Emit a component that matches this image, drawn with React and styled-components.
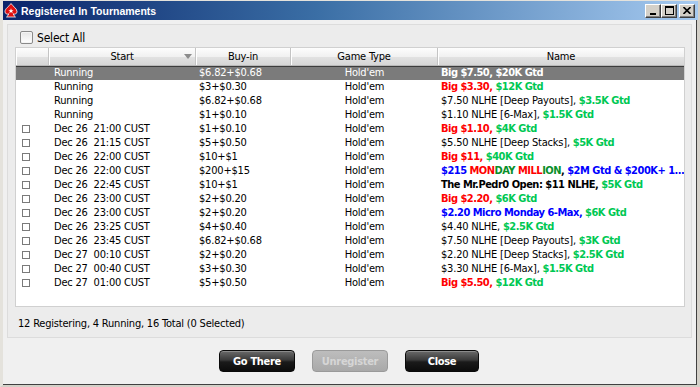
import React from "react";
import styled, { createGlobalStyle } from "styled-components";

const GlobalStyle = createGlobalStyle`
  html, body {
    margin: 0;
    padding: 0;
    background: #d4d0c8;
  }
`;

const NARROW = `"DejaVu Sans Condensed", "Liberation Sans", sans-serif`;
const GREEN = "#00c853";
const RED = "#ff0000";
const BLUE = "#0000ff";
const DGREEN = "#0a8f2a";

const Window = styled.div`
  width: 700px;
  height: 387px;
  box-sizing: border-box;
  display: flex;
  flex-direction: column;
  background: #f0f0f0;
  border-left: 3px solid #e4e2dc;
  border-top: 1px solid #e4e2dc;
  border-right: 3px solid #d4d0c8;
  border-bottom: 2px solid #d4d0c8;
  box-shadow: inset -1px -1px 0 #404040;
  font-family: ${NARROW};
  font-size: 11px;
  letter-spacing: -0.2px;
  color: #000;
`;

const TitleBar = styled.div`
  height: 19px;
  flex: none;
  display: flex;
  align-items: center;
  padding: 0 3px 0 1px;
  margin-right: -1px;
  background: linear-gradient(to right, #0a246a 0%, #3a6ea5 45%, #a6caf0 100%);
`;

const TitleText = styled.span`
  flex: 1;
  margin-left: 3px;
  color: #fff;
  font-family: "Liberation Sans", Arial, sans-serif;
  font-weight: bold;
  font-size: 10.5px;
  letter-spacing: 0;
`;

const WinButtons = styled.div`
  display: flex;
`;

const WinButton = styled.div`
  width: 16px;
  height: 14px;
  margin-left: ${(p) => (p.$gap ? "2px" : "0")};
  box-sizing: border-box;
  background: #d4d0c8;
  border: 1px solid;
  border-color: #fff #404040 #404040 #fff;
  box-shadow: inset -1px -1px 0 #808080;
  display: flex;
  align-items: center;
  justify-content: center;
`;

const Body = styled.div`
  flex: 1;
  display: flex;
  flex-direction: column;
  padding: 4px 5px 0 4px;
  min-height: 0;
`;

const Panel = styled.div`
  height: 314px;
  box-sizing: border-box;
  border: 1px solid #dcdcdc;
  background: #ececec;
  display: flex;
  flex-direction: column;
  padding: 4px 6px 0 7px;
`;

const SelectRow = styled.label`
  height: 17px;
  display: flex;
  align-items: center;
  gap: 2px;
  margin-bottom: 1px;
  padding-left: 5px;
  font-size: 12px;
`;

const BigCheck = styled.span`
  width: 11px;
  height: 11px;
  border: 1px solid #8a8a8a;
  border-radius: 2px;
  background: linear-gradient(#e6e6e6, #ffffff);
  box-shadow: inset 0 0 0 1px #f4f4f4;
  margin-right: 2px;
`;

const Table = styled.div`
  height: 260px;
  box-sizing: border-box;
  background: #fff;
  border: 1px solid #d0d0d0;
  display: flex;
  flex-direction: column;
  overflow: hidden;
`;

const cols = "33px 147px 95px 147px 1fr";

const HeaderRow = styled.div`
  display: grid;
  grid-template-columns: ${cols};
  height: 17px;
  flex: none;
  background: linear-gradient(#fdfdfd 0%, #f1f1f1 50%, #e2e2e2 51%, #d6d6d6 100%);
  border-bottom: 1px solid #b8b8b8;
`;

const HeadCell = styled.div`
  position: relative;
  display: flex;
  align-items: center;
  justify-content: center;
  border-right: 1px solid #c4c4c4;
  box-shadow: inset 1px 0 0 #fff;
  &:last-child {
    border-right: none;
  }
`;

const SortArrow = styled.span`
  position: absolute;
  right: 3px;
  top: 6px;
  width: 0;
  height: 0;
  border-left: 4px solid transparent;
  border-right: 4px solid transparent;
  border-top: 5px solid #8c8c8c;
`;

const Row = styled.div`
  display: grid;
  grid-template-columns: ${cols};
  height: 14px;
  line-height: 14px;
  flex: none;
  background: ${(p) => (p.$selected ? "#7b7b7b" : "#fff")};
  color: ${(p) => (p.$selected ? "#fff" : "#000")};
  box-shadow: ${(p) => (p.$selected ? "inset 0 1px 0 #3c3c3c" : "none")};
`;

const Cell = styled.div`
  white-space: pre;
  overflow: hidden;
  padding-left: ${(p) => p.$pad || 0}px;
  text-align: ${(p) => p.$align || "left"};
  display: ${(p) => (p.$box ? "flex" : "block")};
  align-items: center;
`;

const SmallCheck = styled.span`
  width: 6px;
  height: 6px;
  margin-left: 6px;
  border: 1px solid #7a7a7a;
  background: #fff;
`;

const Seg = styled.span`
  color: ${(p) => p.$color || "inherit"};
  font-weight: ${(p) => (p.$bold ? "bold" : "normal")};
  letter-spacing: ${(p) => (p.$bold ? "-0.5px" : "-0.2px")};
`;

const Status = styled.div`
  flex: 1;
  display: flex;
  align-items: center;
  padding: 2px 0 0 3px;
`;

const ButtonBar = styled.div`
  flex: 1;
  display: flex;
  justify-content: center;
  align-items: flex-start;
  padding-top: 12px;
  padding-right: 1px;
  gap: 17px;
`;

const Button = styled.div`
  width: ${(p) => p.$w || 76}px;
  height: 22px;
  box-sizing: border-box;
  border-radius: 4px;
  display: flex;
  align-items: center;
  justify-content: center;
  font-weight: bold;
  letter-spacing: -0.3px;
  border: 1px solid ${(p) => (p.$disabled ? "#9a9a9a" : "#0a0a0a")};
  color: ${(p) => (p.$disabled ? "#d6d6d6" : "#fff")};
  background: ${(p) =>
    p.$disabled
      ? "linear-gradient(#bdbdbd, #a9a9a9)"
      : "linear-gradient(#6a6a6a 0%, #3a3a3a 45%, #1a1a1a 55%, #0c0c0c 100%)"};
  box-shadow: ${(p) => (p.$disabled ? "none" : "inset 0 1px 0 #8a8a8a")};
`;

const s = (text, color, bold = true) => ({ text, color, bold });
const p = (text) => ({ text, color: null, bold: false });

const rows = [
  { start: "Running", buy: "$6.82+$0.68", name: [s("Big $7.50, $20K Gtd", null)], selected: true },
  { start: "Running", buy: "$3+$0.30", name: [s("Big $3.30, ", RED), s("$12K Gtd", GREEN)] },
  { start: "Running", buy: "$6.82+$0.68", name: [p("$7.50 NLHE [Deep Payouts], "), s("$3.5K Gtd", GREEN)] },
  { start: "Running", buy: "$1+$0.10", name: [p("$1.10 NLHE [6-Max], "), s("$1.5K Gtd", GREEN)] },
  { start: "Dec 26  21:00 CUST", buy: "$1+$0.10", check: true, name: [s("Big $1.10, ", RED), s("$4K Gtd", GREEN)] },
  { start: "Dec 26  21:15 CUST", buy: "$5+$0.50", check: true, name: [p("$5.50 NLHE [Deep Stacks], "), s("$5K Gtd", GREEN)] },
  { start: "Dec 26  22:00 CUST", buy: "$10+$1", check: true, name: [s("Big $11, ", RED), s("$40K Gtd", GREEN)] },
  {
    start: "Dec 26  22:00 CUST",
    buy: "$200+$15",
    check: true,
    name: [
      s("$215 ", BLUE),
      s("MON", RED),
      s("DAY ", DGREEN),
      s("MILL", RED),
      s("ION", DGREEN),
      s(", ", "#000"),
      s("$2M Gtd & $200K+ 1...", BLUE),
    ],
  },
  { start: "Dec 26  22:45 CUST", buy: "$10+$1", check: true, name: [s("The Mr.Pedr0 Open: $11 NLHE, ", "#000"), s("$5K Gtd", GREEN)] },
  { start: "Dec 26  23:00 CUST", buy: "$2+$0.20", check: true, name: [s("Big $2.20, ", RED), s("$6K Gtd", GREEN)] },
  { start: "Dec 26  23:00 CUST", buy: "$2+$0.20", check: true, name: [s("$2.20 Micro Monday 6-Max, ", BLUE), s("$6K Gtd", GREEN)] },
  { start: "Dec 26  23:25 CUST", buy: "$4+$0.40", check: true, name: [p("$4.40 NLHE, "), s("$2.5K Gtd", GREEN)] },
  { start: "Dec 26  23:45 CUST", buy: "$6.82+$0.68", check: true, name: [p("$7.50 NLHE [Deep Payouts], "), s("$3K Gtd", GREEN)] },
  { start: "Dec 27  00:10 CUST", buy: "$2+$0.20", check: true, name: [p("$2.20 NLHE [Deep Stacks], "), s("$2.5K Gtd", GREEN)] },
  { start: "Dec 27  00:40 CUST", buy: "$3+$0.30", check: true, name: [p("$3.30 NLHE [6-Max], "), s("$1.5K Gtd", GREEN)] },
  { start: "Dec 27  01:00 CUST", buy: "$5+$0.50", check: true, name: [s("Big $5.50, ", RED), s("$12K Gtd", GREEN)] },
];

const SpadeIcon = () => (
  <svg width="14" height="15" viewBox="0 0 14 15">
    <path
      d="M7 0.5 C5 3.5 1 5.5 1 8.6 C1 10.7 3 11.8 4.8 10.8 C4.4 12.2 3.6 13.2 2.5 14 L11.5 14 C10.4 13.2 9.6 12.2 9.2 10.8 C11 11.8 13 10.7 13 8.6 C13 5.5 9 3.5 7 0.5 Z"
      fill="#e01010"
      stroke="#fff"
      strokeWidth="0.8"
    />
    <path d="M7 5.2 L7.7 7.2 L9.6 7.2 L8.1 8.3 L8.7 10.2 L7 9 L5.3 10.2 L5.9 8.3 L4.4 7.2 L6.3 7.2 Z" fill="#fff" />
  </svg>
);

const MinIcon = () => (
  <svg width="8" height="8" viewBox="0 0 8 8">
    <rect x="1" y="6" width="6" height="2" fill="#000" />
  </svg>
);

const MaxIcon = () => (
  <svg width="9" height="9" viewBox="0 0 9 9">
    <rect x="0.5" y="0.5" width="8" height="8" fill="none" stroke="#000" />
    <rect x="0" y="0" width="9" height="2" fill="#000" />
  </svg>
);

const CloseIcon = () => (
  <svg width="8" height="7" viewBox="0 0 8 7">
    <path d="M0.5 0 L7.5 7 M7.5 0 L0.5 7" stroke="#000" strokeWidth="1.6" />
  </svg>
);

export default function App() {
  return (
    <>
      <GlobalStyle />
      <Window>
        <TitleBar>
          <SpadeIcon />
          <TitleText>Registered In Tournaments</TitleText>
          <WinButtons>
            <WinButton>
              <MinIcon />
            </WinButton>
            <WinButton>
              <MaxIcon />
            </WinButton>
            <WinButton $gap>
              <CloseIcon />
            </WinButton>
          </WinButtons>
        </TitleBar>
        <Body>
          <Panel>
            <SelectRow>
              <BigCheck />
              Select All
            </SelectRow>
            <Table>
              <HeaderRow>
                <HeadCell />
                <HeadCell>
                  Start
                  <SortArrow />
                </HeadCell>
                <HeadCell>Buy-in</HeadCell>
                <HeadCell>Game Type</HeadCell>
                <HeadCell>Name</HeadCell>
              </HeaderRow>
              {rows.map((r, i) => (
                <Row key={i} $selected={r.selected}>
                  <Cell $box>{r.check && <SmallCheck />}</Cell>
                  <Cell $pad={5}>{r.start}</Cell>
                  <Cell $pad={3}>{r.buy}</Cell>
                  <Cell $align="center">Hold'em</Cell>
                  <Cell $pad={3}>
                    {r.name.map((seg, j) => (
                      <Seg key={j} $color={r.selected ? null : seg.color} $bold={seg.bold}>
                        {seg.text}
                      </Seg>
                    ))}
                  </Cell>
                </Row>
              ))}
            </Table>
            <Status>12 Registering, 4 Running, 16 Total (0 Selected)</Status>
          </Panel>
          <ButtonBar>
            <Button>Go There</Button>
            <Button $disabled>Unregister</Button>
            <Button $w={74}>Close</Button>
          </ButtonBar>
        </Body>
      </Window>
    </>
  );
}
